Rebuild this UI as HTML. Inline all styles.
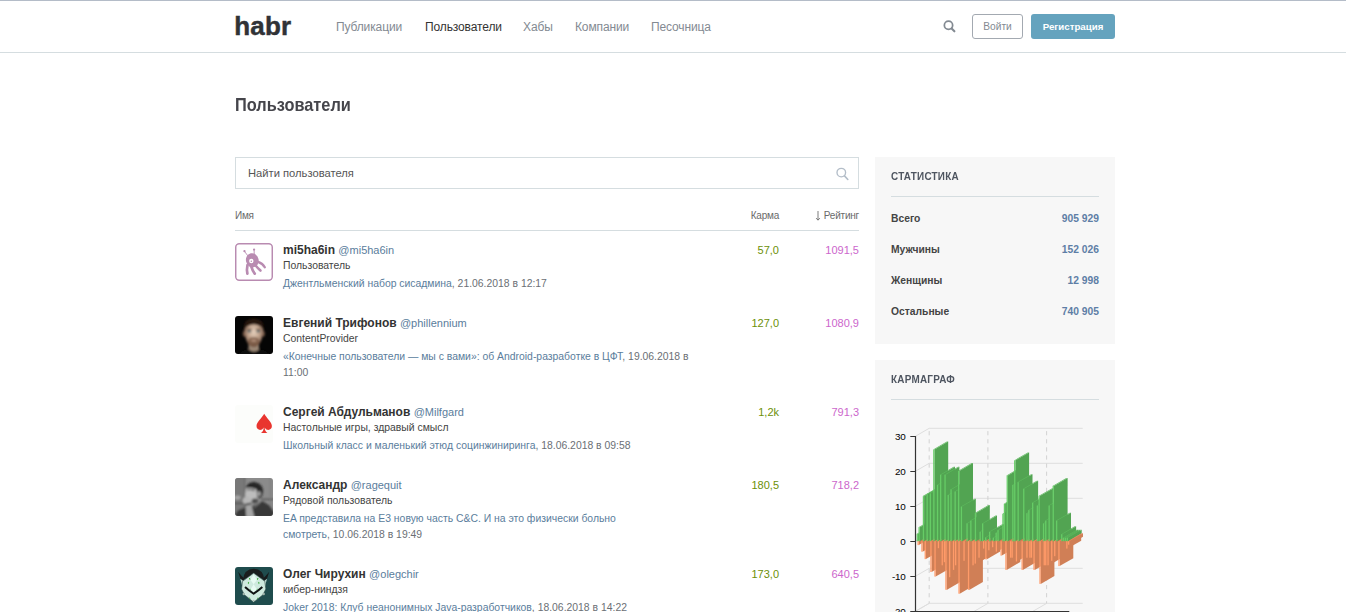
<!DOCTYPE html>
<html lang="ru">
<head>
<meta charset="utf-8">
<title>Пользователи / Хабр</title>
<style>
*{box-sizing:border-box;margin:0;padding:0}
html,body{width:1346px;height:612px;overflow:hidden;background:#fff}
body{font-family:"Liberation Sans",Arial,sans-serif;color:#333;position:relative}
a{text-decoration:none;color:inherit}
.topline{position:absolute;left:0;top:0;width:1346px;height:1px;background:#b4bcc8}
.header{position:absolute;left:0;top:0;width:1346px;height:53px;border-bottom:1px solid #d5dde0}
.logo{position:absolute;left:234.300px;top:9.600px;font-size:26px;font-weight:700;color:#303236;letter-spacing:0.15px;line-height:32px;-webkit-text-stroke:.45px #303236}
.nav{position:absolute;top:19px;left:336px;font-size:12px;line-height:16px;color:#838a92;white-space:nowrap;letter-spacing:-0.12px}
.nav a{position:absolute;top:0}
.nav a.act{color:#333}
.sicon{position:absolute;left:943px;top:20px}
.btn{position:absolute;top:14px;height:25px;border-radius:3px;font-size:10.2px;line-height:24px;text-align:center}
.btn.login{left:972px;width:51px;border:1px solid #a3a9b1;color:#838a92}
.btn.reg{left:1031px;width:84px;background:#65a3be;color:#fff;font-weight:700;line-height:26px;font-size:9.7px}
h1{position:absolute;left:234.500px;top:93px;font-size:19px;line-height:24px;font-weight:700;color:#45454b;transform-origin:0 50%;transform:scaleX(.86);white-space:nowrap}
.search{position:absolute;left:235px;top:157px;width:624px;height:32px;border:1px solid #d5dde0;border-radius:0}
.search span{position:absolute;left:12px;top:8px;font-size:11.2px;line-height:14px;color:#555}
.search svg{position:absolute;right:9px;top:9px}
.th{position:absolute;top:209.500px;font-size:10px;line-height:12px;color:#6a6a6a;white-space:nowrap;letter-spacing:-0.22px}
.thline{position:absolute;left:235px;top:230px;width:624px;height:1px;background:#d5dde0}
.row{position:absolute;left:235px;width:624px}
.ava{position:absolute;left:0;top:0;width:38px;height:38px;border-radius:3px;overflow:hidden}
.name{position:absolute;left:48px;top:-1px;white-space:nowrap;font-size:12px;line-height:16px;font-weight:700;color:#333}
.name span{font-weight:400;font-size:11px;color:#5a7d9c}
.spec{position:absolute;left:48px;top:16.300px;font-size:10.4px;line-height:14px;color:#444;white-space:nowrap}
.post{position:absolute;left:48px;top:33px;width:420px;font-size:10.4px;line-height:16px;color:#5a7d9c}
.post i{font-style:normal;color:#6b6f75}
.karma{position:absolute;right:80px;top:0;font-size:11px;line-height:14px;color:#6c9007;text-align:right}
.rating{position:absolute;right:0;top:0;font-size:11px;line-height:14px;color:#c6c;text-align:right}
.box{position:absolute;left:875px;width:240px;background:#f7f7f7}
.box h3{position:absolute;left:16px;top:12px;font-size:11.5px;line-height:14px;font-weight:700;color:#4e5560;letter-spacing:.3px;transform-origin:0 50%;transform:scaleX(.86);white-space:nowrap}
.box .hl{position:absolute;left:16px;top:39px;width:208px;height:1px;background:#d5dde0}
.st{position:absolute;left:16px;width:208px;font-size:10.3px;line-height:12px;font-weight:700;color:#444;margin-top:.7px}
.st b{position:absolute;right:0;top:0;color:#5e7ea6}
</style>
</head>
<body>
<div class="header">
  <div class="logo">habr</div>
  <div class="nav">
    <a style="left:0">Публикации</a>
    <a class="act" style="left:89px">Пользователи</a>
    <a style="left:187px">Хабы</a>
    <a style="left:239px">Компании</a>
    <a style="left:315px">Песочница</a>
  </div>
  <svg class="sicon" width="13" height="13" viewBox="0 0 13 13"><circle cx="5.500" cy="5.250" r="4.150" fill="none" stroke="#838a92" stroke-width="1.750"/><path d="M8.600 8.400L11.400 11.300" stroke="#838a92" stroke-width="2.100" stroke-linecap="round"/></svg>
  <a class="btn login">Войти</a>
  <a class="btn reg">Регистрация</a>
</div>
<div class="topline"></div>
<h1>Пользователи</h1>

<div class="search"><span>Найти пользователя</span>
<svg width="13" height="14" viewBox="0 0 13 14"><circle cx="5.3" cy="5.600" r="4.300" fill="none" stroke="#b3bdc8" stroke-width="1.350"/><path d="M8.500 8.900L11.800 12.500" stroke="#b3bdc8" stroke-width="1.600" stroke-linecap="round"/></svg>
</div>
<div class="th" style="left:235px">Имя</div>
<div class="th" style="right:567px">Карма</div>
<div class="th" style="right:487px"><svg width="6" height="10" viewBox="0 0 6 10" style="position:absolute;left:-8.700px;top:1.800px"><path d="M3 0V9M1.100 7.100L3 9.200L4.900 7.100" fill="none" stroke="#666" stroke-width=".85"/></svg>Рейтинг</div>
<div class="thline"></div>

<div class="row" style="top:243px">
  <div class="ava" id="av1"><svg width="38" height="38" viewBox="62 60 466 466"><rect x="71" y="69" width="448" height="448" rx="42" fill="#fff" stroke="#b98bb1" stroke-width="18"/><g fill="none" stroke="#b98bb1" stroke-linecap="round"><path d="M218 215L180 165M298 195L296 148" stroke-width="11"/><path d="M215 330Q203 390 214 436" stroke-width="33"/><path d="M262 350Q276 400 304 436" stroke-width="33"/><path d="M315 335Q345 372 374 398" stroke-width="31"/><path d="M345 292Q402 312 427 358" stroke-width="29"/></g><ellipse cx="274" cy="272" rx="78" ry="88" fill="#b98bb1" transform="rotate(-12 274 272)"/><circle cx="178" cy="160" r="14" fill="#b98bb1"/><circle cx="296" cy="140" r="14" fill="#b98bb1"/><circle cx="262" cy="280" r="27" fill="#fff"/><circle cx="262" cy="283" r="9" fill="#b98bb1"/></svg></div>
  <div class="name">mi5ha6in <span>@mi5ha6in</span></div>
  <div class="spec">Пользователь</div>
  <div class="post">Джентльменский набор сисадмина<i>, 21.06.2018 в 12:17</i></div>
  <div class="karma">57,0</div><div class="rating">1091,5</div>
</div>
<div class="row" style="top:316px">
  <div class="ava" id="av2"><svg width="38" height="38" viewBox="0 0 38 38"><defs><radialGradient id="fg" cx=".5" cy=".42" r=".62"><stop offset="0" stop-color="#e4cfbc"/><stop offset=".5" stop-color="#c2a48e"/><stop offset="1" stop-color="#5e4234"/></radialGradient><filter id="b2" x="-20%" y="-20%" width="140%" height="140%"><feGaussianBlur stdDeviation="0.85"/></filter></defs><rect width="38" height="38" fill="#050505"/><g filter="url(#b2)"><rect x="13.5" y="27" width="10.5" height="10" fill="#9a8674"/><path d="M2 39Q9 32.500 14 33.500Q19 38 24 33.500Q29 32.500 36 39Z" fill="#080808"/><ellipse cx="9.3" cy="17.8" rx="1.5" ry="3" fill="#7a5a48"/><ellipse cx="28.300" cy="17.800" rx="1.500" ry="3" fill="#7a5a48"/><path d="M9.500 14Q9 6 18.800 5.500Q28.600 6 28.100 14Q28 22 25 27Q22 31 18.800 31Q15.600 31 12.600 27Q9.600 22 9.500 14Z" fill="url(#fg)"/><path d="M8.800 15.500Q7.500 2.500 18.800 2.500Q30.100 2.500 28.800 15.500Q27.500 9 18.800 8.300Q10.100 9 8.800 15.500Z" fill="#27170f"/><ellipse cx="18.800" cy="26.300" rx="6" ry="4.600" fill="#75543f" opacity=".75"/><ellipse cx="18.800" cy="22.600" rx="4.600" ry="1.300" fill="#80604c" opacity=".8"/><ellipse cx="18.800" cy="24.500" rx="2.800" ry=".9" fill="#b79580"/><ellipse cx="14.300" cy="15.400" rx="2.100" ry="1.100" fill="#56676a"/><ellipse cx="23.300" cy="15.400" rx="2.100" ry="1.100" fill="#56676a"/><path d="M11.800 13.300h5M20.800 13.300h5" stroke="#6b4a38" stroke-width="1"/></g></svg></div>
  <div class="name">Евгений Трифонов <span>@phillennium</span></div>
  <div class="spec">ContentProvider</div>
  <div class="post">«Конечные пользователи — мы с вами»: об Android-разработке в ЦФТ<i>, 19.06.2018 в 11:00</i></div>
  <div class="karma">127,0</div><div class="rating">1080,9</div>
</div>
<div class="row" style="top:405px">
  <div class="ava" id="av3"><svg width="38" height="38" viewBox="0 0 38 38"><rect width="38" height="38" fill="#fcfdfb"/><path d="M29.2 8.8C27 13 21.500 17 21.500 21C21.500 24.300 24.500 25.700 27 24.400C27.800 24 28.400 23.200 28.700 22.600C28.700 25 27.700 27 26 28L32.400 28C30.700 27 29.700 25 29.700 22.600C30 23.200 30.600 24 31.400 24.400C33.900 25.700 36.900 24.300 36.900 21C36.900 17 31.400 13 29.200 8.800Z" fill="#e9352f"/></svg></div>
  <div class="name">Сергей Абдульманов <span>@Milfgard</span></div>
  <div class="spec">Настольные игры, здравый смысл</div>
  <div class="post">Школьный класс и маленький этюд социнжиниринга<i>, 18.06.2018 в 09:58</i></div>
  <div class="karma">1,2k</div><div class="rating">791,3</div>
</div>
<div class="row" style="top:478px">
  <div class="ava" id="av4"><svg width="38" height="38" viewBox="62 60 466 466"><defs><filter id="b4" x="-20%" y="-20%" width="140%" height="140%"><feGaussianBlur stdDeviation="10"/></filter></defs><rect x="62" y="60" width="466" height="466" fill="#8b8b8b"/><g filter="url(#b4)"><rect x="40" y="40" width="140" height="500" fill="#787878"/><ellipse cx="92" cy="300" rx="40" ry="26" fill="#a6a6a6"/><path d="M181 40V540" stroke="#505050" stroke-width="10"/><path d="M40 372H172M385 322H540" stroke="#3c3c3c" stroke-width="12"/><path d="M497 40V540" stroke="#707070" stroke-width="8"/><path d="M40 540L100 455L190 418L290 400L400 345L480 395L540 480V540Z" fill="#383838"/><path d="M290 425L372 362" stroke="#9c9c9c" stroke-width="9"/><path d="M196 175Q215 112 295 108Q380 118 402 190Q412 255 378 305L330 290L325 200Q260 175 196 190Z" fill="#262626"/><path d="M198 185Q260 170 325 200L335 290Q320 340 270 345L200 330L185 270Z" fill="#bdbdbd"/><ellipse cx="357" cy="252" rx="20" ry="32" fill="#a9a9a9"/><path d="M212 205Q255 195 300 215" stroke="#3a3a3a" stroke-width="14" fill="none"/><ellipse cx="305" cy="340" rx="38" ry="30" fill="#4c4c4c"/><path d="M190 395L262 385L300 540H200Z" fill="#a6a6a6"/><ellipse cx="208" cy="338" rx="52" ry="50" fill="#b7b7b7"/><path d="M183 388L255 374" stroke="#262626" stroke-width="20"/></g></svg></div>
  <div class="name">Александр <span>@ragequit</span></div>
  <div class="spec">Рядовой пользователь</div>
  <div class="post">EA представила на E3 новую часть C&amp;C. И на это физически больно<br>смотреть<i>, 10.06.2018 в 19:49</i></div>
  <div class="karma">180,5</div><div class="rating">718,2</div>
</div>
<div class="row" style="top:567px">
  <div class="ava" id="av5"><svg width="38" height="38" viewBox="62 60 466 466"><rect x="62" y="60" width="466" height="466" fill="#1f4c4d"/><path d="M100 118L128 205L160 240L178 200Q140 170 100 118ZM482 118L454 205L422 240L404 200Q442 170 482 118Z" fill="#171c1c"/><path d="M128 205Q140 250 150 300L175 240ZM454 205Q442 250 432 300L407 240Z" fill="#bcd9cf"/><path d="M160 215Q175 85 291 82Q407 85 422 215L291 150Z" fill="#1a1e1e"/><path d="M155 235L291 135L427 235L440 330L405 400L291 492L177 400L142 330Z" fill="#cfeadf" stroke="#2d4845" stroke-width="7"/><path d="M291 150L332 215L291 272L250 215ZM291 272L326 330L291 378L256 330Z" fill="#e8fbf3"/><path d="M185 305Q235 350 291 388Q347 350 397 305" fill="none" stroke="#101414" stroke-width="25" stroke-linejoin="round"/><g fill="#3aa83a"><path d="M232 195l14 0l6 22l-12 0zM350 195l-14 0l-6 22l12 0zM218 255l10 -14l8 8l-8 22zM364 255l-10 -14l-8 8l8 22zM245 320l10 18l-8 8zM337 320l-10 18l8 8zM232 425l20 25l-8 5zM350 425l-20 25l8 5z"/></g><circle cx="170" cy="392" r="15" fill="#9fb3aa"/><circle cx="414" cy="392" r="15" fill="#9fb3aa"/><ellipse cx="291" cy="470" rx="14" ry="8" fill="#aab8b0"/></svg></div>
  <div class="name">Олег Чирухин <span>@olegchir</span></div>
  <div class="spec">кибер-ниндзя</div>
  <div class="post">Joker 2018: Клуб неанонимных Java-разработчиков<i>, 18.06.2018 в 14:22</i></div>
  <div class="karma">173,0</div><div class="rating">640,5</div>
</div>

<div class="box" style="top:157px;height:187px">
  <h3>СТАТИСТИКА</h3><div class="hl"></div>
  <div class="st" style="top:55px">Всего<b>905 929</b></div>
  <div class="st" style="top:86px">Мужчины<b>152 026</b></div>
  <div class="st" style="top:117px">Женщины<b>12 998</b></div>
  <div class="st" style="top:148px">Остальные<b>740 905</b></div>
</div>
<div class="box" style="top:360px;height:260px">
  <h3>КАРМАГРАФ</h3><div class="hl"></div>
</div>
<!--CHART--><svg class="chart" width="240" height="212" viewBox="0 0 240 212" style="position:absolute;left:875px;top:400px">
<path d="M40.5,36.2 L54.2,28.3 H207.7" fill="none" stroke="#dedede" stroke-width="1"/>
<path d="M40.5,71.2 L54.2,63.3 H207.7" fill="none" stroke="#dedede" stroke-width="1"/>
<path d="M40.5,106.2 L54.2,98.3 H207.7" fill="none" stroke="#dedede" stroke-width="1"/>
<path d="M40.5,141.2 L54.2,133.3 H207.7" fill="none" stroke="#dedede" stroke-width="1"/>
<path d="M40.5,176.2 L54.2,168.3 H207.7" fill="none" stroke="#dedede" stroke-width="1"/>
<path d="M40.5,211.2 L54.2,203.3 H207.7" fill="none" stroke="#dedede" stroke-width="1"/>
<path d="M40.5,211.3 L54.2,203.4" fill="none" stroke="#dedede" stroke-width="1"/>
<path d="M54.2,31.1 V203.4" fill="none" stroke="#d2d2d2" stroke-width="1" stroke-dasharray="4.2,3.9"/>
<path d="M99.2,211.3 L112.9,203.4" fill="none" stroke="#dedede" stroke-width="1"/>
<path d="M112.9,31.1 V203.4" fill="none" stroke="#d2d2d2" stroke-width="1" stroke-dasharray="4.2,3.9"/>
<path d="M157.9,211.3 L171.6,203.4" fill="none" stroke="#dedede" stroke-width="1"/>
<path d="M171.6,31.1 V203.4" fill="none" stroke="#d2d2d2" stroke-width="1" stroke-dasharray="4.2,3.9"/>
<polygon points="42.9,133.9 56.6,126.0 56.6,133.3 42.9,141.2" fill="#52a452"/>
<polygon points="41.6,133.9 42.9,133.9 56.6,126.0 55.3,126.0" fill="#5cb85c"/>
<rect x="41.6" y="133.9" width="1.3" height="7.4" fill="#6c6"/>
<polygon points="43.8,141.2 57.5,133.3 57.5,137.2 43.8,145.1" fill="#d07f56"/>
<polygon points="42.5,141.2 43.8,141.2 57.5,133.3 56.2,133.3" fill="#e88c5e"/>
<rect x="42.5" y="141.2" width="1.3" height="3.9" fill="#ff9b69"/>
<polygon points="44.8,127.2 58.5,119.3 58.5,133.3 44.8,141.2" fill="#52a452"/>
<polygon points="43.5,127.2 44.8,127.2 58.5,119.3 57.2,119.3" fill="#5cb85c"/>
<rect x="43.5" y="127.2" width="1.3" height="14.0" fill="#6c6"/>
<polygon points="47.6,141.2 61.3,133.3 61.3,143.8 47.6,151.7" fill="#d07f56"/>
<polygon points="46.3,141.2 47.6,141.2 61.3,133.3 60.0,133.3" fill="#e88c5e"/>
<rect x="46.3" y="141.2" width="1.3" height="10.5" fill="#ff9b69"/>
<polygon points="49.1,96.1 62.8,88.2 62.8,133.3 49.1,141.2" fill="#52a452"/>
<polygon points="47.8,96.1 49.1,96.1 62.8,88.2 61.5,88.2" fill="#5cb85c"/>
<rect x="47.8" y="96.1" width="1.3" height="45.1" fill="#6c6"/>
<polygon points="50.9,141.2 64.6,133.3 64.6,151.2 50.9,159.1" fill="#d07f56"/>
<polygon points="49.6,141.2 50.9,141.2 64.6,133.3 63.3,133.3" fill="#e88c5e"/>
<rect x="49.6" y="141.2" width="1.3" height="17.9" fill="#ff9b69"/>
<polygon points="52.8,94.3 66.5,86.4 66.5,133.3 52.8,141.2" fill="#52a452"/>
<polygon points="51.5,94.3 52.8,94.3 66.5,86.4 65.2,86.4" fill="#5cb85c"/>
<rect x="51.5" y="94.3" width="1.3" height="46.9" fill="#6c6"/>
<polygon points="56.0,93.3 69.7,85.4 69.7,133.3 56.0,141.2" fill="#52a452"/>
<polygon points="54.7,93.3 56.0,93.3 69.7,85.4 68.4,85.4" fill="#5cb85c"/>
<rect x="54.7" y="93.3" width="1.3" height="47.9" fill="#6c6"/>
<polygon points="56.6,141.2 70.3,133.3 70.3,164.1 56.6,172.0" fill="#d07f56"/>
<polygon points="55.3,141.2 56.6,141.2 70.3,133.3 69.0,133.3" fill="#e88c5e"/>
<rect x="55.3" y="141.2" width="1.3" height="30.8" fill="#ff9b69"/>
<polygon points="59.5,49.5 73.2,41.6 73.2,133.3 59.5,141.2" fill="#52a452"/>
<polygon points="58.2,49.5 59.5,49.5 73.2,41.6 71.9,41.6" fill="#5cb85c"/>
<rect x="58.2" y="49.5" width="1.3" height="91.7" fill="#6c6"/>
<polygon points="60.7,141.2 74.4,133.3 74.4,168.7 60.7,176.6" fill="#d07f56"/>
<polygon points="59.4,141.2 60.7,141.2 74.4,133.3 73.1,133.3" fill="#e88c5e"/>
<rect x="59.4" y="141.2" width="1.3" height="35.4" fill="#ff9b69"/>
<polygon points="63.2,84.9 76.9,77.0 76.9,133.3 63.2,141.2" fill="#52a452"/>
<polygon points="61.9,84.9 63.2,84.9 76.9,77.0 75.6,77.0" fill="#5cb85c"/>
<rect x="61.9" y="84.9" width="1.3" height="56.4" fill="#6c6"/>
<polygon points="64.1,141.2 77.8,133.3 77.8,140.3 64.1,148.2" fill="#d07f56"/>
<polygon points="62.8,141.2 64.1,141.2 77.8,133.3 76.5,133.3" fill="#e88c5e"/>
<rect x="62.8" y="141.2" width="1.3" height="7.0" fill="#ff9b69"/>
<polygon points="66.3,74.7 80.0,66.8 80.0,133.3 66.3,141.2" fill="#52a452"/>
<polygon points="65.0,74.7 66.3,74.7 80.0,66.8 78.7,66.8" fill="#5cb85c"/>
<rect x="65.0" y="74.7" width="1.3" height="66.5" fill="#6c6"/>
<polygon points="67.9,141.2 81.6,133.3 81.6,157.5 67.9,165.4" fill="#d07f56"/>
<polygon points="66.6,141.2 67.9,141.2 81.6,133.3 80.3,133.3" fill="#e88c5e"/>
<rect x="66.6" y="141.2" width="1.3" height="24.1" fill="#ff9b69"/>
<polygon points="70.1,141.2 83.8,133.3 83.8,154.3 70.1,162.2" fill="#d07f56"/>
<polygon points="68.8,141.2 70.1,141.2 83.8,133.3 82.5,133.3" fill="#e88c5e"/>
<rect x="68.8" y="141.2" width="1.3" height="21.0" fill="#ff9b69"/>
<polygon points="70.7,74.7 84.4,66.8 84.4,133.3 70.7,141.2" fill="#52a452"/>
<polygon points="69.4,74.7 70.7,74.7 84.4,66.8 83.1,66.8" fill="#5cb85c"/>
<rect x="69.4" y="74.7" width="1.3" height="66.5" fill="#6c6"/>
<polygon points="71.6,141.2 85.3,133.3 85.3,182.0 71.6,189.9" fill="#d07f56"/>
<polygon points="70.3,141.2 71.6,141.2 85.3,133.3 84.0,133.3" fill="#e88c5e"/>
<rect x="70.3" y="141.2" width="1.3" height="48.6" fill="#ff9b69"/>
<polygon points="73.9,95.0 87.6,87.1 87.6,133.3 73.9,141.2" fill="#52a452"/>
<polygon points="72.6,95.0 73.9,95.0 87.6,87.1 86.3,87.1" fill="#5cb85c"/>
<rect x="72.6" y="95.0" width="1.3" height="46.2" fill="#6c6"/>
<polygon points="75.3,141.2 89.0,133.3 89.0,169.4 75.3,177.2" fill="#d07f56"/>
<polygon points="74.0,141.2 75.3,141.2 89.0,133.3 87.7,133.3" fill="#e88c5e"/>
<rect x="74.0" y="141.2" width="1.3" height="36.0" fill="#ff9b69"/>
<polygon points="76.7,89.4 90.4,81.5 90.4,133.3 76.7,141.2" fill="#52a452"/>
<polygon points="75.4,89.4 76.7,89.4 90.4,81.5 89.1,81.5" fill="#5cb85c"/>
<rect x="75.4" y="89.4" width="1.3" height="51.8" fill="#6c6"/>
<polygon points="79.2,141.2 92.9,133.3 92.9,162.0 79.2,169.9" fill="#d07f56"/>
<polygon points="77.9,141.2 79.2,141.2 92.9,133.3 91.6,133.3" fill="#e88c5e"/>
<rect x="77.9" y="141.2" width="1.3" height="28.7" fill="#ff9b69"/>
<polygon points="80.8,91.5 94.5,83.6 94.5,133.3 80.8,141.2" fill="#52a452"/>
<polygon points="79.5,91.5 80.8,91.5 94.5,83.6 93.2,83.6" fill="#5cb85c"/>
<rect x="79.5" y="91.5" width="1.3" height="49.7" fill="#6c6"/>
<polygon points="81.3,141.2 95.0,133.3 95.0,157.5 81.3,165.4" fill="#d07f56"/>
<polygon points="80.0,141.2 81.3,141.2 95.0,133.3 93.7,133.3" fill="#e88c5e"/>
<rect x="80.0" y="141.2" width="1.3" height="24.1" fill="#ff9b69"/>
<polygon points="84.3,70.9 98.0,63.0 98.0,133.3 84.3,141.2" fill="#52a452"/>
<polygon points="83.0,70.9 84.3,70.9 98.0,63.0 96.7,63.0" fill="#5cb85c"/>
<rect x="83.0" y="70.9" width="1.3" height="70.4" fill="#6c6"/>
<polygon points="84.7,141.2 98.4,133.3 98.4,185.8 84.7,193.7" fill="#d07f56"/>
<polygon points="83.4,141.2 84.7,141.2 98.4,133.3 97.1,133.3" fill="#e88c5e"/>
<rect x="83.4" y="141.2" width="1.3" height="52.5" fill="#ff9b69"/>
<polygon points="87.1,106.6 100.8,98.7 100.8,133.3 87.1,141.2" fill="#52a452"/>
<polygon points="85.8,106.6 87.1,106.6 100.8,98.7 99.5,98.7" fill="#5cb85c"/>
<rect x="85.8" y="106.6" width="1.3" height="34.6" fill="#6c6"/>
<polygon points="89.7,141.2 103.4,133.3 103.4,152.9 89.7,160.8" fill="#d07f56"/>
<polygon points="88.4,141.2 89.7,141.2 103.4,133.3 102.1,133.3" fill="#e88c5e"/>
<rect x="88.4" y="141.2" width="1.3" height="19.6" fill="#ff9b69"/>
<polygon points="92.7,123.4 106.4,115.5 106.4,133.3 92.7,141.2" fill="#52a452"/>
<polygon points="91.4,123.4 92.7,123.4 106.4,115.5 105.1,115.5" fill="#5cb85c"/>
<rect x="91.4" y="123.4" width="1.3" height="17.9" fill="#6c6"/>
<polygon points="94.2,141.2 107.9,133.3 107.9,182.0 94.2,189.9" fill="#d07f56"/>
<polygon points="92.9,141.2 94.2,141.2 107.9,133.3 106.6,133.3" fill="#e88c5e"/>
<rect x="92.9" y="141.2" width="1.3" height="48.6" fill="#ff9b69"/>
<polygon points="96.5,120.6 110.2,112.7 110.2,133.3 96.5,141.2" fill="#52a452"/>
<polygon points="95.2,120.6 96.5,120.6 110.2,112.7 108.9,112.7" fill="#5cb85c"/>
<rect x="95.2" y="120.6" width="1.3" height="20.6" fill="#6c6"/>
<polygon points="98.7,141.2 112.4,133.3 112.4,157.5 98.7,165.4" fill="#d07f56"/>
<polygon points="97.4,141.2 98.7,141.2 112.4,133.3 111.1,133.3" fill="#e88c5e"/>
<rect x="97.4" y="141.2" width="1.3" height="24.1" fill="#ff9b69"/>
<polygon points="100.9,141.2 114.6,133.3 114.6,155.7 100.9,163.6" fill="#d07f56"/>
<polygon points="99.6,141.2 100.9,141.2 114.6,133.3 113.3,133.3" fill="#e88c5e"/>
<rect x="99.6" y="141.2" width="1.3" height="22.4" fill="#ff9b69"/>
<polygon points="101.1,113.0 114.8,105.1 114.8,133.3 101.1,141.2" fill="#52a452"/>
<polygon points="99.8,113.0 101.1,113.0 114.8,105.1 113.5,105.1" fill="#5cb85c"/>
<rect x="99.8" y="113.0" width="1.3" height="28.2" fill="#6c6"/>
<polygon points="104.7,141.2 118.4,133.3 118.4,149.8 104.7,157.7" fill="#d07f56"/>
<polygon points="103.4,141.2 104.7,141.2 118.4,133.3 117.1,133.3" fill="#e88c5e"/>
<rect x="103.4" y="141.2" width="1.3" height="16.5" fill="#ff9b69"/>
<polygon points="105.8,131.8 119.5,123.9 119.5,133.3 105.8,141.2" fill="#52a452"/>
<polygon points="104.5,131.8 105.8,131.8 119.5,123.9 118.2,123.9" fill="#5cb85c"/>
<rect x="104.5" y="131.8" width="1.3" height="9.5" fill="#6c6"/>
<polygon points="108.3,123.4 122.0,115.5 122.0,133.3 108.3,141.2" fill="#52a452"/>
<polygon points="107.0,123.4 108.3,123.4 122.0,115.5 120.7,115.5" fill="#5cb85c"/>
<rect x="107.0" y="123.4" width="1.3" height="17.9" fill="#6c6"/>
<polygon points="109.3,141.2 123.0,133.3 123.0,140.7 109.3,148.6" fill="#d07f56"/>
<polygon points="108.0,141.2 109.3,141.2 123.0,133.3 121.7,133.3" fill="#e88c5e"/>
<rect x="108.0" y="141.2" width="1.3" height="7.4" fill="#ff9b69"/>
<polygon points="111.3,137.4 125.0,129.5 125.0,133.3 111.3,141.2" fill="#52a452"/>
<polygon points="110.0,137.4 111.3,137.4 125.0,129.5 123.7,129.5" fill="#5cb85c"/>
<rect x="110.0" y="137.4" width="1.3" height="3.9" fill="#6c6"/>
<polygon points="111.5,141.2 125.2,133.3 125.2,151.5 111.5,159.4" fill="#d07f56"/>
<polygon points="110.2,141.2 111.5,141.2 125.2,133.3 123.9,133.3" fill="#e88c5e"/>
<rect x="110.2" y="141.2" width="1.3" height="18.2" fill="#ff9b69"/>
<polygon points="114.5,141.2 128.2,133.3 128.2,142.4 114.5,150.3" fill="#d07f56"/>
<polygon points="113.2,141.2 114.5,141.2 128.2,133.3 126.9,133.3" fill="#e88c5e"/>
<rect x="113.2" y="141.2" width="1.3" height="9.1" fill="#ff9b69"/>
<polygon points="115.3,131.8 129.0,123.9 129.0,133.3 115.3,141.2" fill="#52a452"/>
<polygon points="114.0,131.8 115.3,131.8 129.0,123.9 127.7,123.9" fill="#5cb85c"/>
<rect x="114.0" y="131.8" width="1.3" height="9.5" fill="#6c6"/>
<polygon points="118.3,141.2 132.0,133.3 132.0,139.3 118.3,147.2" fill="#d07f56"/>
<polygon points="117.0,141.2 118.3,141.2 132.0,133.3 130.7,133.3" fill="#e88c5e"/>
<rect x="117.0" y="141.2" width="1.3" height="6.0" fill="#ff9b69"/>
<polygon points="119.0,137.7 132.7,129.8 132.7,133.3 119.0,141.2" fill="#52a452"/>
<polygon points="117.7,137.7 119.0,137.7 132.7,129.8 131.4,129.8" fill="#5cb85c"/>
<rect x="117.7" y="137.7" width="1.3" height="3.5" fill="#6c6"/>
<polygon points="121.8,132.8 135.5,124.9 135.5,133.3 121.8,141.2" fill="#52a452"/>
<polygon points="120.5,132.8 121.8,132.8 135.5,124.9 134.2,124.9" fill="#5cb85c"/>
<rect x="120.5" y="132.8" width="1.3" height="8.4" fill="#6c6"/>
<polygon points="122.0,141.2 135.7,133.3 135.7,143.8 122.0,151.7" fill="#d07f56"/>
<polygon points="120.7,141.2 122.0,141.2 135.7,133.3 134.4,133.3" fill="#e88c5e"/>
<rect x="120.7" y="141.2" width="1.3" height="10.5" fill="#ff9b69"/>
<polygon points="123.7,130.0 137.4,122.1 137.4,133.3 123.7,141.2" fill="#52a452"/>
<polygon points="122.4,130.0 123.7,130.0 137.4,122.1 136.1,122.1" fill="#5cb85c"/>
<rect x="122.4" y="130.0" width="1.3" height="11.2" fill="#6c6"/>
<polygon points="126.8,141.2 140.5,133.3 140.5,147.7 126.8,155.6" fill="#d07f56"/>
<polygon points="125.5,141.2 126.8,141.2 140.5,133.3 139.2,133.3" fill="#e88c5e"/>
<rect x="125.5" y="141.2" width="1.3" height="14.4" fill="#ff9b69"/>
<polygon points="128.6,113.9 142.3,106.0 142.3,133.3 128.6,141.2" fill="#52a452"/>
<polygon points="127.3,113.9 128.6,113.9 142.3,106.0 141.0,106.0" fill="#5cb85c"/>
<rect x="127.3" y="113.9" width="1.3" height="27.3" fill="#6c6"/>
<polygon points="130.1,103.8 143.8,95.9 143.8,133.3 130.1,141.2" fill="#52a452"/>
<polygon points="128.8,103.8 130.1,103.8 143.8,95.9 142.5,95.9" fill="#5cb85c"/>
<rect x="128.8" y="103.8" width="1.3" height="37.4" fill="#6c6"/>
<polygon points="131.6,141.2 145.3,133.3 145.3,162.0 131.6,169.9" fill="#d07f56"/>
<polygon points="130.3,141.2 131.6,141.2 145.3,133.3 144.0,133.3" fill="#e88c5e"/>
<rect x="130.3" y="141.2" width="1.3" height="28.7" fill="#ff9b69"/>
<polygon points="132.9,75.4 146.6,67.5 146.6,133.3 132.9,141.2" fill="#52a452"/>
<polygon points="131.6,75.4 132.9,75.4 146.6,67.5 145.3,67.5" fill="#5cb85c"/>
<rect x="131.6" y="75.4" width="1.3" height="65.8" fill="#6c6"/>
<polygon points="136.3,141.2 150.0,133.3 150.0,149.8 136.3,157.7" fill="#d07f56"/>
<polygon points="135.0,141.2 136.3,141.2 150.0,133.3 148.7,133.3" fill="#e88c5e"/>
<rect x="135.0" y="141.2" width="1.3" height="16.5" fill="#ff9b69"/>
<polygon points="137.8,141.2 151.5,133.3 151.5,149.8 137.8,157.7" fill="#d07f56"/>
<polygon points="136.5,141.2 137.8,141.2 151.5,133.3 150.2,133.3" fill="#e88c5e"/>
<rect x="136.5" y="141.2" width="1.3" height="16.5" fill="#ff9b69"/>
<polygon points="138.5,84.9 152.2,77.0 152.2,133.3 138.5,141.2" fill="#52a452"/>
<polygon points="137.2,84.9 138.5,84.9 152.2,77.0 150.9,77.0" fill="#5cb85c"/>
<rect x="137.2" y="84.9" width="1.3" height="56.4" fill="#6c6"/>
<polygon points="140.4,60.4 154.1,52.5 154.1,133.3 140.4,141.2" fill="#52a452"/>
<polygon points="139.1,60.4 140.4,60.4 154.1,52.5 152.8,52.5" fill="#5cb85c"/>
<rect x="139.1" y="60.4" width="1.3" height="80.9" fill="#6c6"/>
<polygon points="142.1,141.2 155.8,133.3 155.8,153.6 142.1,161.5" fill="#d07f56"/>
<polygon points="140.8,141.2 142.1,141.2 155.8,133.3 154.5,133.3" fill="#e88c5e"/>
<rect x="140.8" y="141.2" width="1.3" height="20.3" fill="#ff9b69"/>
<polygon points="143.8,82.1 157.5,74.2 157.5,133.3 143.8,141.2" fill="#52a452"/>
<polygon points="142.5,82.1 143.8,82.1 157.5,74.2 156.2,74.2" fill="#5cb85c"/>
<rect x="142.5" y="82.1" width="1.3" height="59.1" fill="#6c6"/>
<polygon points="147.8,141.2 161.5,133.3 161.5,162.0 147.8,169.9" fill="#d07f56"/>
<polygon points="146.5,141.2 147.8,141.2 161.5,133.3 160.2,133.3" fill="#e88c5e"/>
<rect x="146.5" y="141.2" width="1.3" height="28.7" fill="#ff9b69"/>
<polygon points="149.4,88.7 163.1,80.8 163.1,133.3 149.4,141.2" fill="#52a452"/>
<polygon points="148.1,88.7 149.4,88.7 163.1,80.8 161.8,80.8" fill="#5cb85c"/>
<rect x="148.1" y="88.7" width="1.3" height="52.5" fill="#6c6"/>
<polygon points="152.6,113.2 166.3,105.3 166.3,133.3 152.6,141.2" fill="#52a452"/>
<polygon points="151.3,113.2 152.6,113.2 166.3,105.3 165.0,105.3" fill="#5cb85c"/>
<rect x="151.3" y="113.2" width="1.3" height="28.0" fill="#6c6"/>
<polygon points="152.6,141.2 166.3,133.3 166.3,149.8 152.6,157.7" fill="#d07f56"/>
<polygon points="151.3,141.2 152.6,141.2 166.3,133.3 165.0,133.3" fill="#e88c5e"/>
<rect x="151.3" y="141.2" width="1.3" height="16.5" fill="#ff9b69"/>
<polygon points="154.5,110.1 168.2,102.2 168.2,133.3 154.5,141.2" fill="#52a452"/>
<polygon points="153.2,110.1 154.5,110.1 168.2,102.2 166.9,102.2" fill="#5cb85c"/>
<rect x="153.2" y="110.1" width="1.3" height="31.1" fill="#6c6"/>
<polygon points="155.6,141.2 169.3,133.3 169.3,149.8 155.6,157.7" fill="#d07f56"/>
<polygon points="154.3,141.2 155.6,141.2 169.3,133.3 168.0,133.3" fill="#e88c5e"/>
<rect x="154.3" y="141.2" width="1.3" height="16.5" fill="#ff9b69"/>
<polygon points="157.1,141.2 170.8,133.3 170.8,149.8 157.1,157.7" fill="#d07f56"/>
<polygon points="155.8,141.2 157.1,141.2 170.8,133.3 169.5,133.3" fill="#e88c5e"/>
<rect x="155.8" y="141.2" width="1.3" height="16.5" fill="#ff9b69"/>
<polygon points="158.3,102.7 172.0,94.8 172.0,133.3 158.3,141.2" fill="#52a452"/>
<polygon points="157.0,102.7 158.3,102.7 172.0,94.8 170.7,94.8" fill="#5cb85c"/>
<rect x="157.0" y="102.7" width="1.3" height="38.5" fill="#6c6"/>
<polygon points="159.7,141.2 173.4,133.3 173.4,162.0 159.7,169.9" fill="#d07f56"/>
<polygon points="158.4,141.2 159.7,141.2 173.4,133.3 172.1,133.3" fill="#e88c5e"/>
<rect x="158.4" y="141.2" width="1.3" height="28.7" fill="#ff9b69"/>
<polygon points="163.0,105.5 176.7,97.6 176.7,133.3 163.0,141.2" fill="#52a452"/>
<polygon points="161.7,105.5 163.0,105.5 176.7,97.6 175.4,97.6" fill="#5cb85c"/>
<rect x="161.7" y="105.5" width="1.3" height="35.7" fill="#6c6"/>
<polygon points="164.8,96.1 178.5,88.2 178.5,133.3 164.8,141.2" fill="#52a452"/>
<polygon points="163.5,96.1 164.8,96.1 178.5,88.2 177.2,88.2" fill="#5cb85c"/>
<rect x="163.5" y="96.1" width="1.3" height="45.1" fill="#6c6"/>
<polygon points="165.7,141.2 179.4,133.3 179.4,176.0 165.7,183.9" fill="#d07f56"/>
<polygon points="164.4,141.2 165.7,141.2 179.4,133.3 178.1,133.3" fill="#e88c5e"/>
<rect x="164.4" y="141.2" width="1.3" height="42.7" fill="#ff9b69"/>
<polygon points="169.2,123.4 182.9,115.5 182.9,133.3 169.2,141.2" fill="#52a452"/>
<polygon points="167.9,123.4 169.2,123.4 182.9,115.5 181.6,115.5" fill="#5cb85c"/>
<rect x="167.9" y="123.4" width="1.3" height="17.9" fill="#6c6"/>
<polygon points="169.9,141.2 183.6,133.3 183.6,157.5 169.9,165.4" fill="#d07f56"/>
<polygon points="168.6,141.2 169.9,141.2 183.6,133.3 182.3,133.3" fill="#e88c5e"/>
<rect x="168.6" y="141.2" width="1.3" height="24.1" fill="#ff9b69"/>
<polygon points="171.4,120.6 185.1,112.7 185.1,133.3 171.4,141.2" fill="#52a452"/>
<polygon points="170.1,120.6 171.4,120.6 185.1,112.7 183.8,112.7" fill="#5cb85c"/>
<rect x="170.1" y="120.6" width="1.3" height="20.6" fill="#6c6"/>
<polygon points="171.4,141.2 185.1,133.3 185.1,157.5 171.4,165.4" fill="#d07f56"/>
<polygon points="170.1,141.2 171.4,141.2 185.1,133.3 183.8,133.3" fill="#e88c5e"/>
<rect x="170.1" y="141.2" width="1.3" height="24.1" fill="#ff9b69"/>
<polygon points="173.7,141.2 187.4,133.3 187.4,157.5 173.7,165.4" fill="#d07f56"/>
<polygon points="172.4,141.2 173.7,141.2 187.4,133.3 186.1,133.3" fill="#e88c5e"/>
<rect x="172.4" y="141.2" width="1.3" height="24.1" fill="#ff9b69"/>
<polygon points="174.8,105.5 188.5,97.6 188.5,133.3 174.8,141.2" fill="#52a452"/>
<polygon points="173.5,105.5 174.8,105.5 188.5,97.6 187.2,97.6" fill="#5cb85c"/>
<rect x="173.5" y="105.5" width="1.3" height="35.7" fill="#6c6"/>
<polygon points="177.4,141.2 191.1,133.3 191.1,152.9 177.4,160.8" fill="#d07f56"/>
<polygon points="176.1,141.2 177.4,141.2 191.1,133.3 189.8,133.3" fill="#e88c5e"/>
<rect x="176.1" y="141.2" width="1.3" height="19.6" fill="#ff9b69"/>
<polygon points="178.9,85.9 192.6,78.0 192.6,133.3 178.9,141.2" fill="#52a452"/>
<polygon points="177.6,85.9 178.9,85.9 192.6,78.0 191.3,78.0" fill="#5cb85c"/>
<rect x="177.6" y="85.9" width="1.3" height="55.3" fill="#6c6"/>
<polygon points="180.4,141.2 194.1,133.3 194.1,148.4 180.4,156.2" fill="#d07f56"/>
<polygon points="179.1,141.2 180.4,141.2 194.1,133.3 192.8,133.3" fill="#e88c5e"/>
<rect x="179.1" y="141.2" width="1.3" height="15.0" fill="#ff9b69"/>
<polygon points="182.3,120.6 196.0,112.7 196.0,133.3 182.3,141.2" fill="#52a452"/>
<polygon points="181.0,120.6 182.3,120.6 196.0,112.7 194.7,112.7" fill="#5cb85c"/>
<rect x="181.0" y="120.6" width="1.3" height="20.6" fill="#6c6"/>
<polygon points="184.6,141.2 198.3,133.3 198.3,158.2 184.6,166.1" fill="#d07f56"/>
<polygon points="183.3,141.2 184.6,141.2 198.3,133.3 197.0,133.3" fill="#e88c5e"/>
<rect x="183.3" y="141.2" width="1.3" height="24.9" fill="#ff9b69"/>
<polygon points="187.4,134.2 201.1,126.3 201.1,133.3 187.4,141.2" fill="#52a452"/>
<polygon points="186.1,134.2 187.4,134.2 201.1,126.3 199.8,126.3" fill="#5cb85c"/>
<rect x="186.1" y="134.2" width="1.3" height="7.0" fill="#6c6"/>
<polygon points="189.3,137.7 203.0,129.8 203.0,133.3 189.3,141.2" fill="#52a452"/>
<polygon points="188.0,137.7 189.3,137.7 203.0,129.8 201.7,129.8" fill="#5cb85c"/>
<rect x="188.0" y="137.7" width="1.3" height="3.5" fill="#6c6"/>
<polygon points="191.1,137.7 204.8,129.8 204.8,133.3 191.1,141.2" fill="#52a452"/>
<polygon points="189.8,137.7 191.1,137.7 204.8,129.8 203.5,129.8" fill="#5cb85c"/>
<rect x="189.8" y="137.7" width="1.3" height="3.5" fill="#6c6"/>
<polygon points="192.5,141.2 206.2,133.3 206.2,140.7 192.5,148.6" fill="#d07f56"/>
<polygon points="191.2,141.2 192.5,141.2 206.2,133.3 204.9,133.3" fill="#e88c5e"/>
<rect x="191.2" y="141.2" width="1.3" height="7.4" fill="#ff9b69"/>
<polygon points="193.0,137.7 206.7,129.8 206.7,133.3 193.0,141.2" fill="#52a452"/>
<polygon points="191.7,137.7 193.0,137.7 206.7,129.8 205.4,129.8" fill="#5cb85c"/>
<rect x="191.7" y="137.7" width="1.3" height="3.5" fill="#6c6"/>
<polygon points="194.3,141.2 208.0,133.3 208.0,136.8 194.3,144.7" fill="#d07f56"/>
<polygon points="193.0,141.2 194.3,141.2 208.0,133.3 206.7,133.3" fill="#e88c5e"/>
<rect x="193.0" y="141.2" width="1.3" height="3.5" fill="#ff9b69"/>
<path d="M40.5,36.0 V212" stroke="#333" stroke-width="1.2" fill="none"/>
<path d="M35.8,211.5 H194.3" stroke="#333" stroke-width="1" fill="none"/>
<path d="M35.3,36.5 H41" stroke="#333" stroke-width="1" fill="none"/>
<text x="30.3" y="40.0" text-anchor="end" font-size="9.9" letter-spacing="-0.35" fill="#000" font-family="Liberation Sans, sans-serif">30</text>
<path d="M35.3,71.5 H41" stroke="#333" stroke-width="1" fill="none"/>
<text x="30.3" y="75.0" text-anchor="end" font-size="9.9" letter-spacing="-0.35" fill="#000" font-family="Liberation Sans, sans-serif">20</text>
<path d="M35.3,106.5 H41" stroke="#333" stroke-width="1" fill="none"/>
<text x="30.3" y="110.0" text-anchor="end" font-size="9.9" letter-spacing="-0.35" fill="#000" font-family="Liberation Sans, sans-serif">10</text>
<path d="M35.3,141.5 H41" stroke="#333" stroke-width="1" fill="none"/>
<text x="30.3" y="145.0" text-anchor="end" font-size="9.9" letter-spacing="-0.35" fill="#000" font-family="Liberation Sans, sans-serif">0</text>
<path d="M35.3,176.5 H41" stroke="#333" stroke-width="1" fill="none"/>
<text x="30.3" y="180.0" text-anchor="end" font-size="9.9" letter-spacing="-0.35" fill="#000" font-family="Liberation Sans, sans-serif">-10</text>
<path d="M35.3,211.5 H41" stroke="#333" stroke-width="1" fill="none"/>
<text x="30.3" y="215.0" text-anchor="end" font-size="9.9" letter-spacing="-0.35" fill="#000" font-family="Liberation Sans, sans-serif">-20</text>
</svg><!--/CHART-->
</body>
</html>
